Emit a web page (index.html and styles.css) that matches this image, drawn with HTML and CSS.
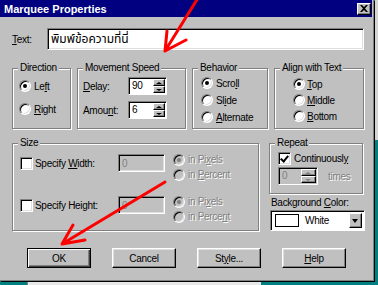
FILE: index.html
```html
<!DOCTYPE html>
<html lang="en">
<head>
    <meta charset="UTF-8">
    <title>Marquee Properties</title>
    <link rel="stylesheet" href="styles.css">
</head>
<body>
<div class="desk">
    <div class="top">
        <div class="dialog">
            <div class="titlebar">
                <span class="title">Marquee Properties</span>
                <span class="close">
                    <svg width="8" height="7" viewBox="0 0 8 7"><path d="M0 0h2l2 2 2-2h2L5 3.5 8 7H6L4 5 2 7H0l3-3.5z" fill="#000"/></svg>
                </span>
            </div>

            <div class="content">
                <!-- text field -->
                <div class="text-row">
                    <span class="text-label"><u>T</u>ext:</span>
                    <div class="field wide thai">พิมพ์ข้อความที่นี่</div>
                </div>

                <!-- first row of groups -->
                <div class="groups">
                    <fieldset class="grp">
                        <legend>Direction</legend>
                        <div class="grp-body dir">
                            <div class="opt"><span class="radio on"></span><span>Le<u>f</u>t</span></div>
                            <div class="opt"><span class="radio"></span><span><u>R</u>ight</span></div>
                        </div>
                    </fieldset>

                    <fieldset class="grp">
                        <legend>Movement Speed</legend>
                        <div class="grp-body speed">
                            <div class="spin-row">
                                <span class="spin-label"><u>D</u>elay:</span>
                                <div class="spin">
                                    <span class="spin-text">90</span>
                                    <div class="spin-btns"><span class="sb up"></span><span class="sb down"></span></div>
                                </div>
                            </div>
                            <div class="spin-row">
                                <span class="spin-label">Amou<u>n</u>t:</span>
                                <div class="spin">
                                    <span class="spin-text">6</span>
                                    <div class="spin-btns"><span class="sb up"></span><span class="sb down"></span></div>
                                </div>
                            </div>
                        </div>
                    </fieldset>

                    <fieldset class="grp">
                        <legend>Behavior</legend>
                        <div class="grp-body behavior">
                            <div class="opt"><span class="radio on"></span><span>Scro<u>l</u>l</span></div>
                            <div class="opt"><span class="radio"></span><span>Sl<u>i</u>de</span></div>
                            <div class="opt"><span class="radio"></span><span><u>A</u>lternate</span></div>
                        </div>
                    </fieldset>

                    <fieldset class="grp">
                        <legend>Align with Text</legend>
                        <div class="grp-body align">
                            <div class="opt"><span class="radio on"></span><span><u>T</u>op</span></div>
                            <div class="opt"><span class="radio"></span><span><u>M</u>iddle</span></div>
                            <div class="opt"><span class="radio"></span><span><u>B</u>ottom</span></div>
                        </div>
                    </fieldset>
                </div>

                <!-- second row -->
                <div class="lower">
                    <fieldset class="grp size">
                        <legend>Size</legend>
                        <div class="grp-body size-body">
                            <div class="size-row">
                                <div class="chk-label"><span class="check"></span><span>Specify <u>W</u>idth:</span></div>
                                <div class="field small off">0</div>
                                <div class="units">
                                    <div class="opt unit dim"><span class="radio on off"></span><span>in Pi<u>x</u>els</span></div>
                                    <div class="opt unit dim"><span class="radio off"></span><span>in <u>P</u>ercent</span></div>
                                </div>
                            </div>
                            <div class="size-row">
                                <div class="chk-label"><span class="check"></span><span>Specify Height:</span></div>
                                <div class="field small off">0</div>
                                <div class="units">
                                    <div class="opt unit dim"><span class="radio on off"></span><span>in Pi<u>x</u>els</span></div>
                                    <div class="opt unit dim"><span class="radio off"></span><span>in Perce<u>n</u>t</span></div>
                                </div>
                            </div>
                        </div>
                    </fieldset>

                    <div class="right">
                        <fieldset class="grp repeat">
                            <legend>Repeat</legend>
                            <div class="grp-body repeat-body">
                                <div class="chk-row"><span class="check on"></span><span>Continuousl<u>y</u></span></div>
                                <div class="times-row">
                                    <div class="spin off">
                                        <span class="spin-text">0</span>
                                        <div class="spin-btns"><span class="sb up"></span><span class="sb down"></span></div>
                                    </div>
                                    <span class="dim times">times</span>
                                </div>
                            </div>
                        </fieldset>
                        <div class="bg-label">Background <u>C</u>olor:</div>
                        <div class="combo">
                            <span class="swatch"></span>
                            <span class="combo-text">White</span>
                            <span class="combo-btn"></span>
                        </div>
                    </div>
                </div>

                <!-- buttons -->
                <div class="buttons">
                    <button class="btn default">OK</button>
                    <button class="btn">Cancel</button>
                    <button class="btn">St<u>y</u>le...</button>
                    <button class="btn"><u>H</u>elp</button>
                </div>
            </div>
        </div>
        <div class="edge"></div>
    </div>
    <div class="below"></div>

    <!-- red hand drawn arrows over the screenshot -->
    <svg class="marks" width="378" height="285" viewBox="0 0 378 285">
        <g stroke="#f00" stroke-width="3" fill="none" stroke-linecap="round" stroke-linejoin="round">
            <path d="M198 -2 L165 51 M165 51 L167 31 M165 51 L186 40"/>
            <path d="M165 182 L62 244 M62 244 L85 240 M62 244 L73 225"/>
        </g>
    </svg>
</div>
</body>
</html>
```

FILE: styles.css
```css
body {
    margin: 0;
    background-color: #008080;
    font-family: 'Liberation Sans', Arial, sans-serif;
    font-size: 10px;
    letter-spacing: -0.3px;
    color: #000;
}

.desk {
    position: relative;
    width: 378px;
    height: 285px;
    overflow: hidden;
}

.top {
    display: flex;
}

.dialog {
    width: 373px;
    height: 280px;
    background-color: #c0c0c0;
    border-right: 1px solid #808080;
    border-bottom: 1px solid #808080;
    box-shadow: 1px 1px 0 #000;
}

.edge {
    flex: 1;
    margin-left: 1px;
    height: 282px;
    background: linear-gradient(#d4d4d4 0 140px, #008080 140px);
}

.below {
    width: 233px;
    height: 4px;
    margin-left: 27px;
    background-color: #e8e8e8;
    border-left: 1px solid #808080;
}

/* title bar */
.titlebar {
    height: 17px;
    margin-right: 1px;
    padding: 0 1px 0 4px;
    background-color: #000080;
    color: #fff;
    display: flex;
    align-items: center;
    justify-content: space-between;
}

.title {
    font-weight: bold;
    font-size: 11px;
    letter-spacing: 0;
}

.close {
    width: 14px;
    height: 12px;
    box-sizing: border-box;
    background-color: #c0c0c0;
    border: 1px solid;
    border-color: #fff #000 #000 #fff;
    box-shadow: inset -1px -1px 0 #808080;
    display: flex;
    align-items: center;
    justify-content: center;
}

.close svg {
    display: block;
}

.content {
    padding: 11px 0 0 12px;
}

/* sunken field */
.field {
    box-sizing: border-box;
    background-color: #fff;
    border: 1px solid;
    border-color: #808080 #fff #fff #808080;
    box-shadow: inset 1px 1px 0 #000, inset -1px -1px 0 #dfdfdf;
    display: flex;
    align-items: center;
    padding: 0 3px;
}

.field.off {
    background-color: #c0c0c0;
    color: #808080;
}

.text-row {
    display: flex;
    align-items: center;
    height: 22px;
}

.text-label {
    width: 35px;
}

.field.wide {
    width: 317px;
    height: 22px;
}

.thai {
    font-family: 'Noto Sans Thai', 'Tlwg Typo', 'Garuda', 'Loma', 'DejaVu Sans', sans-serif;
    font-size: 12px;
    letter-spacing: 0;
}

/* group boxes */
.grp {
    margin: 0;
    padding: 0;
    min-width: 0;
    box-sizing: border-box;
    border: 1px solid #808080;
    box-shadow: 1px 1px 0 #fff, inset 1px 1px 0 #fff;
}

.grp legend {
    margin-left: 5px;
    padding: 0 2px;
    line-height: 12px;
    background-color: #c0c0c0;
}

.grp-body {
    display: flex;
    flex-direction: column;
}

.groups {
    display: grid;
    grid-template-columns: 59px 109px 76px 90px;
    column-gap: 6px;
    margin-top: 12px;
    height: 67px;
}

.opt {
    display: flex;
    align-items: center;
    gap: 3px;
    height: 16px;
}

.dir {
    gap: 7px;
    padding: 4px 0 0 6px;
}

.speed {
    gap: 6px;
    padding: 3px 0 0 5px;
}

.behavior {
    gap: 1px;
    padding: 1px 0 0 8px;
}

.align {
    gap: 0;
    padding: 2px 0 0 18px;
}

.align .opt {
    gap: 2px;
}

/* radios and checks */
.radio {
    position: relative;
    flex: none;
    width: 12px;
    height: 12px;
    box-sizing: border-box;
    border-radius: 50%;
    background-color: #fff;
    border: 1px solid;
    border-color: #808080 #fff #fff #808080;
    box-shadow: inset 1px 1px 0 #000, inset -1px -1px 0 #dfdfdf;
}

.radio.on::after {
    content: '';
    position: absolute;
    left: 3px;
    top: 3px;
    width: 4px;
    height: 4px;
    border-radius: 50%;
    background-color: #000;
}

.radio.off {
    background-color: #c0c0c0;
}

.radio.off::after {
    background-color: #808080;
}

.check {
    position: relative;
    flex: none;
    width: 13px;
    height: 13px;
    box-sizing: border-box;
    background-color: #fff;
    border: 1px solid;
    border-color: #808080 #fff #fff #808080;
    box-shadow: inset 1px 1px 0 #000, inset -1px -1px 0 #dfdfdf;
}

.check.on::after {
    content: '';
    position: absolute;
    left: 3px;
    top: 1px;
    width: 3px;
    height: 6px;
    border-right: 2px solid #000;
    border-bottom: 2px solid #000;
    transform: rotate(40deg);
}

/* spin boxes */
.spin-row {
    display: flex;
    align-items: center;
    height: 18px;
}

.spin-label {
    width: 45px;
}

.spin {
    display: flex;
    width: 39px;
    height: 18px;
    box-sizing: border-box;
    background-color: #fff;
    border: 1px solid;
    border-color: #808080 #fff #fff #808080;
    box-shadow: inset 1px 1px 0 #000;
    padding: 1px;
}

.spin-text {
    flex: 1;
    padding-left: 2px;
    line-height: 14px;
}

.spin-btns {
    display: flex;
    flex-direction: column;
    width: 12px;
}

.sb {
    position: relative;
    flex: 1;
    box-sizing: border-box;
    background-color: #c0c0c0;
    border: 1px solid;
    border-color: #fff #000 #000 #fff;
    box-shadow: inset -1px -1px 0 #808080;
}

.sb::after {
    content: '';
    position: absolute;
    left: 2px;
    top: 2px;
    border-left: 3px solid transparent;
    border-right: 3px solid transparent;
}

.sb.up::after {
    border-bottom: 2px solid #000;
}

.sb.down::after {
    border-top: 2px solid #000;
}

.spin.off {
    background-color: #c0c0c0;
    color: #808080;
    width: 40px;
}

.spin.off .spin-btns {
    width: 15px;
}

.spin.off .sb.up::after {
    left: 3px;
    border-bottom-color: #808080;
}

.spin.off .sb.down::after {
    left: 3px;
    border-top-color: #808080;
}

/* second row */
.lower {
    display: flex;
    margin-top: 8px;
}

.size {
    width: 247px;
    height: 94px;
}

.size-body {
    padding: 3px 0 0 7px;
}

.size-row {
    display: flex;
    height: 31px;
}

.size-row + .size-row {
    margin-top: 11px;
}

.chk-label {
    display: flex;
    align-items: center;
    gap: 2px;
    width: 98px;
    height: 18px;
    margin-top: 2px;
}

.field.small {
    width: 47px;
    height: 18px;
    margin-top: 2px;
}

.units {
    margin-left: 8px;
}

.unit {
    height: 15px;
}

.dim {
    color: #808080;
    text-shadow: 1px 1px 0 #fff;
}

.right {
    margin-left: 10px;
    width: 96px;
}

.repeat {
    width: 94px;
    height: 57px;
}

.repeat-body {
    padding: 3px 0 0 8px;
}

.chk-row {
    display: flex;
    align-items: center;
    gap: 3px;
    height: 13px;
}

.times-row {
    display: flex;
    align-items: center;
    margin-top: 2px;
}

.times {
    margin-left: 10px;
}

.bg-label {
    margin-top: 3px;
    padding-left: 2px;
    line-height: 12px;
}

.combo {
    display: flex;
    align-items: center;
    width: 95px;
    height: 21px;
    margin: 1px 0 0 1px;
    box-sizing: border-box;
    background-color: #fff;
    border: 1px solid;
    border-color: #808080 #fff #fff #808080;
    box-shadow: inset 1px 1px 0 #000;
    padding: 2px;
}

.swatch {
    width: 22px;
    height: 11px;
    margin-left: 2px;
    border: 1px solid #000;
    background-color: #fff;
}

.combo-text {
    flex: 1;
    margin-left: 6px;
}

.combo-btn {
    position: relative;
    width: 13px;
    height: 15px;
    box-sizing: border-box;
    background-color: #c0c0c0;
    border: 1px solid;
    border-color: #fff #000 #000 #fff;
    box-shadow: inset -1px -1px 0 #808080;
}

.combo-btn::after {
    content: '';
    position: absolute;
    left: 2px;
    top: 5px;
    border-left: 3.5px solid transparent;
    border-right: 3.5px solid transparent;
    border-top: 4px solid #000;
}

/* push buttons */
.buttons {
    display: flex;
    gap: 21px;
    margin-top: 17px;
    padding-left: 15px;
}

.btn {
    width: 64px;
    height: 20px;
    padding: 0;
    font-family: inherit;
    font-size: 10px;
    letter-spacing: -0.3px;
    color: #000;
    background-color: #c0c0c0;
    border: 1px solid;
    border-color: #fff #000 #000 #fff;
    box-shadow: inset -1px -1px 0 #808080, inset 1px 1px 0 #dfdfdf;
}

.btn.default {
    border-color: #000;
    box-shadow: inset 1px 1px 0 #fff, inset -1px -1px 0 #404040, inset -2px -2px 0 #808080;
}

.marks {
    position: absolute;
    left: 0;
    top: 0;
    pointer-events: none;
}
```
